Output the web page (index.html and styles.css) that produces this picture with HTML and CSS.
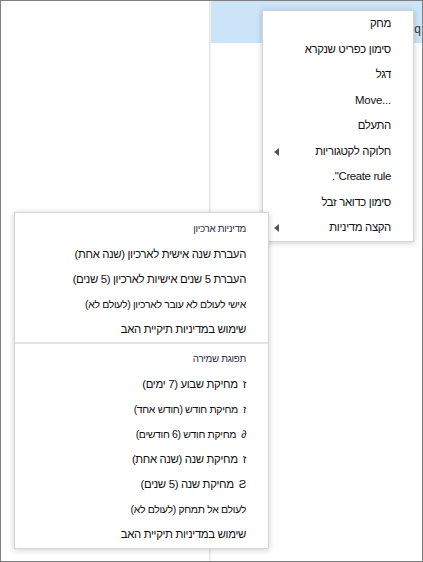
FILE: index.html
```html
<!DOCTYPE html>
<html lang="he">
<head>
  <meta charset="UTF-8">
  <title>תיבת דואר</title>
  <link rel="stylesheet" href="styles.css">
</head>
<body>

<div id="mail-frame">
  <div class="folder-pane"></div>
  <div class="pane-divider"></div>
  <div class="message-pane">
    <div class="message-row selected"><span class="row-peek">q</span></div>
  </div>

  <!-- menu contestuale del messaggio -->
  <ul class="ctx-menu main-menu" dir="rtl">
    <li class="ctx-item">מחק</li>
    <li class="ctx-item">סימון כפריט שנקרא</li>
    <li class="ctx-item">דגל</li>
    <li class="ctx-item latin" dir="ltr">Move...</li>
    <li class="ctx-item">התעלם</li>
    <li class="ctx-item has-sub">חלוקה לקטגוריות</li>
    <li class="ctx-item">Create rule".</li>
    <li class="ctx-item">סימון כדואר זבל</li>
    <li class="ctx-item has-sub">הקצה מדיניות</li>
  </ul>

  <!-- sottomenu criteri -->
  <ul class="ctx-menu sub-menu" dir="rtl">
    <li class="ctx-head first">מדיניות ארכיון</li>
    <li class="ctx-item">העברת שנה אישית לארכיון (שנה אחת)</li>
    <li class="ctx-item">העברת 5 שנים אישיות לארכיון (5 שנים)</li>
    <li class="ctx-item small">אישי לעולם לא עובר לארכיון (לעולם לא)</li>
    <li class="ctx-item">שימוש במדיניות תיקיית האב</li>
    <li class="ctx-sep"></li>
    <li class="ctx-head">תפוגת שמירה</li>
    <li class="ctx-item"><span class="ico">ז</span>מחיקת שבוע (7 ימים)</li>
    <li class="ctx-item small"><span class="ico">ז</span>מחיקת חודש (חודש אחד)</li>
    <li class="ctx-item small"><span class="ico">∂</span>מחיקת חודש (6 חודשים)</li>
    <li class="ctx-item"><span class="ico">ז</span>מחיקת שנה (שנה אחת)</li>
    <li class="ctx-item"><span class="ico">Ƨ</span>מחיקת שנה (5 שנים)</li>
    <li class="ctx-item small">לעולם אל תמחק (לעולם לא)</li>
    <li class="ctx-item">שימוש במדיניות תיקיית האב</li>
  </ul>
</div>

</body>
</html>
```

FILE: styles.css
```css
body {
  margin: 0;
  font-family: 'Liberation Sans', 'DejaVu Sans', sans-serif;
  background-color: #fff;
}

#mail-frame {
  position: relative;
  width: 423px;
  height: 562px;
  box-sizing: border-box;
  border: 1px solid #7f7f7f;
  display: flex;
  overflow: hidden;
  background-color: #fff;
}

.folder-pane {
  width: 208px;
}

.pane-divider {
  width: 1px;
  background-color: #e6e6e6;
}

.message-pane {
  flex: 1;
  border-left: 1px solid #f0f0f0;
}

.message-row {
  height: 42px;
  position: relative;
}

.message-row.selected {
  background-color: #cce4f7;
}

.row-peek {
  position: absolute;
  right: 1px;
  top: 21px;
  font-size: 12px;
  color: #333;
}

.ctx-menu {
  position: absolute;
  margin: 0;
  list-style: none;
  background-color: #fff;
  border: 1px solid #d6d6d6;
  box-shadow: 0 1px 6px rgba(0, 0, 0, 0.2);
  box-sizing: border-box;
  color: #111;
}

.main-menu {
  left: 261px;
  top: 9px;
  width: 152px;
  height: 232px;
  padding: 0 22px 2px 10px;
}

.sub-menu {
  left: 13px;
  top: 211px;
  width: 255px;
  height: 337px;
  padding: 3px 22px 3px 10px;
}

.ctx-item {
  position: relative;
  font-size: 11.4px;
  letter-spacing: -0.35px;
  line-height: 25px;
  height: 25px;
  white-space: nowrap;
}

.ctx-item.latin {
  text-align: right;
  letter-spacing: -0.2px;
}

.main-menu .ctx-item {
  height: 25.5px;
  line-height: 25.5px;
}

.ctx-item.small {
  font-size: 10.5px;
}

.ctx-item .ico {
  margin-left: 5px;
}

.ctx-item.has-sub::after {
  content: "";
  position: absolute;
  left: 1px;
  top: 9px;
  border-top: 4px solid transparent;
  border-bottom: 4px solid transparent;
  border-right: 5px solid #555;
}

.ctx-head {
  font-size: 9.8px;
  letter-spacing: -0.3px;
  line-height: 26px;
  height: 26px;
  color: #1f2a44;
  margin-top: 2px;
}

.ctx-head.first {
  margin-top: 0;
}

.ctx-sep {
  height: 2px;
  background-color: #e3e3e3;
  margin: 0 -22px 0 -10px;
}
```
